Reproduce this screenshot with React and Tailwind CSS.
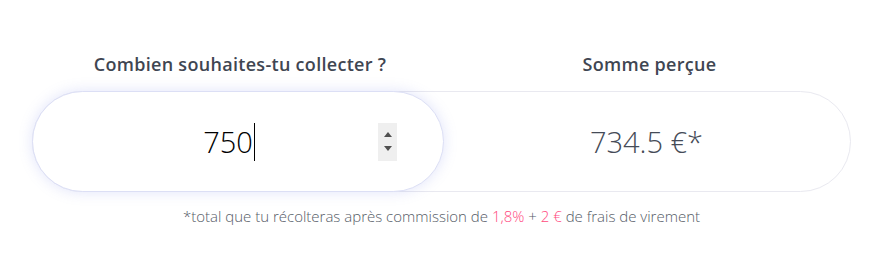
export default function App() {
  return (
    <div className="w-[882px] h-[279px] bg-white pt-[51px] pl-[32px]" style={{ fontFamily: '"Open Sans", "Noto Sans", sans-serif' }}>
      <div className="w-[819px]">
        <div className="grid grid-cols-[410px_1fr] h-[27px] items-center">
          <div className="text-center text-[18px] font-semibold text-[#3f4652] tracking-[0.3px] pl-[6px]">
            Combien souhaites-tu collecter ?
          </div>
          <div className="text-center text-[18px] font-semibold text-[#3f4652] tracking-[0.3px] pl-[6px]">
            Somme perçue
          </div>
        </div>
        <div className="mt-[13px] h-[101px] rounded-full border border-[#e9e9f0] grid grid-cols-[410px_1fr]">
          <div className="-m-px h-[101px] rounded-full bg-white border border-[#dcdff5] shadow-[0_0_14px_rgba(120,130,230,0.22)] flex items-center pl-[47px] pr-[46px]">
            <div className="flex-1 flex justify-center items-center">
              <span className="text-[29px] text-black leading-none font-light">750</span>
              <span className="ml-[1px] w-px h-[38px] bg-black"></span>
            </div>
            <div className="w-[19px] h-[38px] bg-[#efefef] flex flex-col items-center justify-center gap-[9px]">
              <svg width="8" height="5" viewBox="0 0 8 5"><path d="M4 0 L8 5 L0 5 Z" fill="#505050" /></svg>
              <svg width="8" height="5" viewBox="0 0 8 5"><path d="M0 0 L8 0 L4 5 Z" fill="#505050" /></svg>
            </div>
          </div>
          <div className="flex items-center justify-center">
            <span className="text-[29px] text-[#454b57] font-light leading-none">734.5 €*</span>
          </div>
        </div>
        <div className="mt-[13px] text-center text-[15px] font-light text-[#555b66]">
          *total que tu récolteras après commission de <span className="text-[#ff4a80]">1,8%</span> + <span className="text-[#ff4a80]">2 €</span> de frais de virement
        </div>
      </div>
    </div>
  );
}
